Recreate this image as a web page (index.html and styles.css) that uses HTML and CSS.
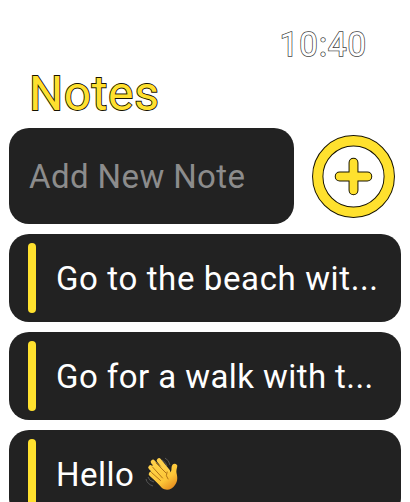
FILE: index.html
```html
<!DOCTYPE html>
<html lang="en">
<head>
<meta charset="utf-8">
<title>Notes</title>
<link rel="stylesheet" href="styles.css">
</head>
<body>
<main class="watch">
  <header class="header">
    <h1 class="title">Notes</h1>
    <time class="clock">10:40</time>
  </header>
  <section class="composer">
    <div class="field">Add New Note</div>
    <svg class="add" viewBox="0 0 84 84" role="img" aria-label="Add">
      <circle class="edge" cx="42" cy="42" r="36.2"/>
      <circle class="ring" cx="42" cy="42" r="36.2"/>
      <path class="plus-edge" d="M42 28v28M28 42h28"/>
      <path class="plus" d="M42 28v28M28 42h28"/>
    </svg>
  </section>
  <section class="list">
    <article class="note"><span class="bar"></span><p class="text beach">Go to the beach wit...</p></article>
    <article class="note"><span class="bar"></span><p class="text walk">Go for a walk with t...</p></article>
    <article class="note"><span class="bar"></span><p class="text hello">Hello</p>
      <svg class="wave" viewBox="0 0 34 35" aria-label="Waving hand">
        <defs><linearGradient id="skin" x1="0" y1="0" x2=".8" y2="1"><stop offset="0" stop-color="#ffd54a"/><stop offset=".65" stop-color="#fdc638"/><stop offset="1" stop-color="#e58b1d"/></linearGradient></defs>
        <path class="motion" d="M20 1q4 2 5 7M17 3q4 2 5 6M1 22q1 5 7 7M3 20q1 4 6 5"/>
        <g class="fingers"><path d="M14 3.500l9 11M8 5l12 13M5.500 10.500l11 11M6 17l9 8"/></g>
        <path fill="url(#skin)" d="M12 7L24 15C26 16 26.500 14 26.500 11C26.500 7 30 5.500 32 8C33 9 31 12 31.500 16C32.500 20 33 24 30 28C27 33 21 34 17 31L5 18Q4 16 7 16L5 11L8 8Z"/>
        <path class="crease" d="M11 6l10 10M7.500 10l10 11M6.500 15.500l9 8M22 15q-2 4 1 7"/>
      </svg>
    </article>
  </section>
</main>
</body>
</html>
```
FILE: styles.css
```css
* { box-sizing: border-box; }
html, body { margin: 0; height: 100%; overflow: hidden; background: #fff; }
.watch { height: 502px; padding: 0 9px; overflow: hidden; font-family: Roboto, sans-serif; }
.header { display: flex; justify-content: space-between; height: 128px; padding: 24px 34px 0 20px; }
.title { margin: 40px 0 0; font-size: 48px; line-height: 60px; font-weight: 400; letter-spacing: .6px; color: #ffe02f; -webkit-text-stroke: 1.800px #171300; paint-order: stroke fill; }
.clock { font-size: 33px; line-height: 41px; letter-spacing: 1px; color: #fff; -webkit-text-stroke: 1.500px #444; paint-order: stroke fill; }
.composer { display: flex; align-items: center; gap: 18px; height: 96px; }
.field { width: 285px; height: 96px; padding-left: 20px; border-radius: 20px; background: #222; color: #8c8c8c; font-size: 33px; line-height: 98px; letter-spacing: .4px; white-space: nowrap; }
.add { flex: none; width: 83px; height: 83px; margin-top: 1px; }
.add circle, .add path { fill: none; stroke-linecap: round; }
.edge { stroke: #161300; stroke-width: 11.500; }
.ring { stroke: #ffe12e; stroke-width: 9.500; }
.plus-edge { stroke: #161300; stroke-width: 10; }
.plus { stroke: #ffe12e; stroke-width: 8; }
.list { display: flex; flex-direction: column; gap: 10px; margin-top: 10px; }
.note { display: flex; align-items: center; flex: none; height: 88px; padding-left: 19px; border-radius: 20px; background: #222; }
.bar { flex: none; width: 8px; height: 70px; border-radius: 4px; background: #ffe12e; }
.text { margin: 2px 0 0 20px; color: #fff; font-size: 33px; line-height: 40px; white-space: nowrap; }
.beach { letter-spacing: .62px; }
.walk { letter-spacing: .43px; }
.hello { letter-spacing: .5px; }
.wave { width: 34px; height: 35px; margin-left: 11px; }
.motion { fill: none; stroke: #555; stroke-width: 1; }
.fingers { fill: none; stroke: #ffd04a; stroke-width: 4.500; stroke-linecap: round; }
.crease { fill: none; stroke: #a86b13; stroke-width: .9; stroke-linecap: round; }
```
